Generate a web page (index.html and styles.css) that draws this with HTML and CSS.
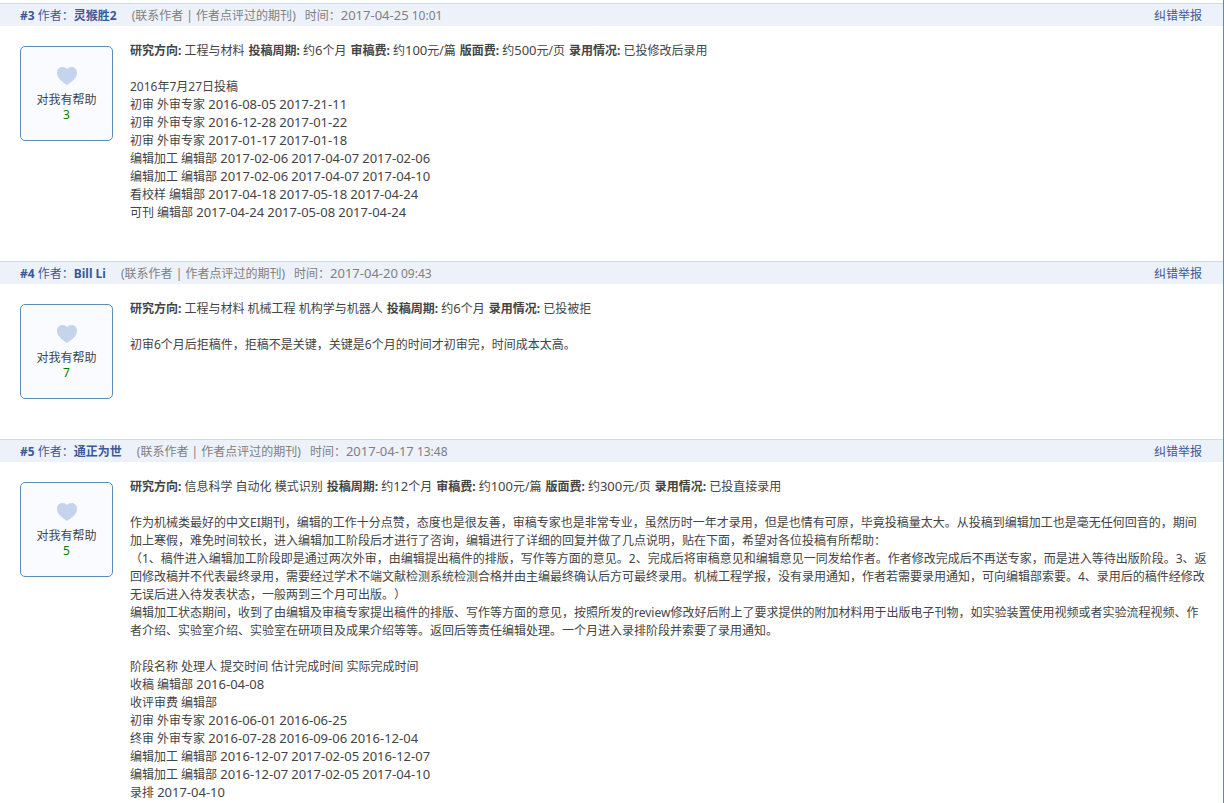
FILE: index.html
```html
<!DOCTYPE html>
<html lang="zh-CN">
<head>
<meta charset="utf-8">
<title>期刊点评</title>
<link rel="stylesheet" href="styles.css">
</head>
<body>
<svg class="sprite" aria-hidden="true">
  <symbol id="heart" viewBox="0 0 20 18">
    <path d="M10 18 C8 16.8 3.6 13.6 1.6 10.8 C.4 9.1 0 7.400 0 5.600 C0 2.400 2.300 0 5.400 0 C7.400 0 9.100 .8 10 2.200 C10.900 .8 12.600 0 14.600 0 C17.700 0 20 2.400 20 5.600 C20 7.400 19.600 9.100 18.400 10.800 C16.400 13.600 12 16.800 10 18 Z"/>
  </symbol>
</svg>
<main class="reviews">
  <article class="review">
    <header class="review-head">
      <div class="author"><b>#3</b> 作者：<a href="#"><b>灵猴胜2</b></a></div>
      <div class="links">(<a href="#">联系作者</a> | <a href="#">作者点评过的期刊</a>)</div>
      <div class="posted">时间：<time>2017-04-25</time> 10:01</div>
      <a class="report" href="#">纠错举报</a>
    </header>
    <div class="review-body">
      <button class="vote" type="button">
        <svg class="heart"><use href="#heart"/></svg>
        <span>对我有帮助</span>
        <span class="count">3</span>
      </button>
      <div class="content">
        <div class="meta">
          <span><b>研究方向:</b> 工程与材料</span>
          <span><b>投稿周期:</b> 约<span class="num">6</span>个月</span>
          <span><b>审稿费:</b> 约<span class="num">100</span>元/篇</span>
          <span><b>版面费:</b> 约<span class="num">500</span>元/页</span>
          <span><b>录用情况:</b> 已投修改后录用</span>
        </div>
        <p>2016年7月27日投稿<br>
          初审 外审专家 <time>2016-08-05</time> <time>2017-21-11</time><br>
          初审 外审专家 <time>2016-12-28</time> <time>2017-01-22</time><br>
          初审 外审专家 <time>2017-01-17</time> <time>2017-01-18</time><br>
          编辑加工 编辑部 <time>2017-02-06</time> <time>2017-04-07</time> <time>2017-02-06</time><br>
          编辑加工 编辑部 <time>2017-02-06</time> <time>2017-04-07</time> <time>2017-04-10</time><br>
          看校样 编辑部 <time>2017-04-18</time> <time>2017-05-18</time> <time>2017-04-24</time><br>
          可刊 编辑部 <time>2017-04-24</time> <time>2017-05-08</time> <time>2017-04-24</time></p>
      </div>
    </div>
  </article>

  <article class="review">
    <header class="review-head">
      <div class="author"><b>#4</b> 作者：<a href="#"><b>Bill Li</b></a></div>
      <div class="links">(<a href="#">联系作者</a> | <a href="#">作者点评过的期刊</a>)</div>
      <div class="posted">时间：<time>2017-04-20</time> 09:43</div>
      <a class="report" href="#">纠错举报</a>
    </header>
    <div class="review-body">
      <button class="vote" type="button">
        <svg class="heart"><use href="#heart"/></svg>
        <span>对我有帮助</span>
        <span class="count">7</span>
      </button>
      <div class="content">
        <div class="meta">
          <span><b>研究方向:</b> 工程与材料 机械工程 机构学与机器人</span>
          <span><b>投稿周期:</b> 约<span class="num">6</span>个月</span>
          <span><b>录用情况:</b> 已投被拒</span>
        </div>
        <p>初审6个月后拒稿件，拒稿不是关键，关键是6个月的时间才初审完，时间成本太高。</p>
      </div>
    </div>
  </article>

  <article class="review">
    <header class="review-head">
      <div class="author"><b>#5</b> 作者：<a href="#"><b>通正为世</b></a></div>
      <div class="links">(<a href="#">联系作者</a> | <a href="#">作者点评过的期刊</a>)</div>
      <div class="posted">时间：<time>2017-04-17</time> 13:48</div>
      <a class="report" href="#">纠错举报</a>
    </header>
    <div class="review-body">
      <button class="vote" type="button">
        <svg class="heart"><use href="#heart"/></svg>
        <span>对我有帮助</span>
        <span class="count">5</span>
      </button>
      <div class="content">
        <div class="meta">
          <span><b>研究方向:</b> 信息科学 自动化 模式识别</span>
          <span><b>投稿周期:</b> 约<span class="num">12</span>个月</span>
          <span><b>审稿费:</b> 约<span class="num">100</span>元/篇</span>
          <span><b>版面费:</b> 约<span class="num">300</span>元/页</span>
          <span><b>录用情况:</b> 已投直接录用</span>
        </div>
        <p>作为机械类最好的中文EI期刊，编辑的工作十分点赞，态度也是很友善，审稿专家也是非常专业，虽然历时一年才录用，但是也情有可原，毕竟投稿量太大。从投稿到编辑加工也是毫无任何回音的，期间加上寒假，难免时间较长，进入编辑加工阶段后才进行了咨询，编辑进行了详细的回复并做了几点说明，贴在下面，希望对各位投稿有所帮助：<br>
          （1、稿件进入编辑加工阶段即是通过两次外审，由编辑提出稿件的排版，写作等方面的意见。2、完成后将审稿意见和编辑意见一同发给作者。作者修改完成后不再送专家，而是进入等待出版阶段。3、返回修改稿并不代表最终录用，需要经过学术不端文献检测系统检测合格并由主编最终确认后方可最终录用。机械工程学报，没有录用通知，作者若需要录用通知，可向编辑部索要。4、录用后的稿件经修改无误后进入待发表状态，一般两到三个月可出版。）<br>
          编辑加工状态期间，收到了由编辑及审稿专家提出稿件的排版、写作等方面的意见，按照所发的review修改好后附上了要求提供的附加材料用于出版电子刊物，如实验装置使用视频或者实验流程视频、作者介绍、实验室介绍、实验室在研项目及成果介绍等等。返回后等责任编辑处理。一个月进入录排阶段并索要了录用通知。</p>
        <p>阶段名称 处理人 提交时间 估计完成时间 实际完成时间<br>
          收稿 编辑部 <time>2016-04-08</time><br>
          收评审费 编辑部<br>
          初审 外审专家 <time>2016-06-01</time> <time>2016-06-25</time><br>
          终审 外审专家 <time>2016-07-28</time> <time>2016-09-06</time> <time>2016-12-04</time><br>
          编辑加工 编辑部 <time>2016-12-07</time> <time>2017-02-05</time> <time>2016-12-07</time><br>
          编辑加工 编辑部 <time>2016-12-07</time> <time>2017-02-05</time> <time>2017-04-10</time><br>
          录排 <time>2017-04-10</time></p>
      </div>
    </div>
  </article>
</main>
</body>
</html>
```
FILE: styles.css
```css
* {
  box-sizing: border-box;
}

body {
  margin: 0;
  background: #fff;
  color: #444;
  font: 12px/18px "Noto Sans", "Noto Sans CJK SC", sans-serif;
  text-spacing-trim: space-all;
}

a {
  color: inherit;
  text-decoration: none;
}

p {
  margin: 0;
}

time,
.num {
  font-size: 13px;
  line-height: 1;
}

.sprite {
  display: none;
}

.reviews {
  min-height: 100vh;
  padding-top: 3px;
  border-right: 1px solid #6189ad;
}

.review-head {
  display: flex;
  padding: 3px 21px 1px 20px;
  border-top: 1px solid #cddaea;
  background: #edf1fa;
  color: #808080;
}

.author,
.report {
  color: #3b5998;
}

.links {
  margin-left: 15px;
}

.posted {
  margin-left: 9px;
}

.report {
  margin-left: auto;
}

.review-body {
  display: flex;
  align-items: flex-start;
  gap: 17px;
  padding: 16px 15px 39px 20px;
}

.review:last-child .review-body {
  padding-bottom: 0;
}

.vote {
  display: flex;
  flex: none;
  flex-direction: column;
  align-items: center;
  width: 93px;
  margin: 4px 0 1px;
  padding: 20px 0 18px;
  border: 1px solid #5b8db8;
  border-radius: 5px;
  background: #f9fbfe;
  color: #444;
  font: inherit;
  line-height: 15px;
  cursor: pointer;
}

.heart {
  width: 20px;
  height: 18px;
  margin-bottom: 7px;
  fill: #c5d4ed;
}

.count {
  color: #008000;
}

.content {
  flex: 1;
  min-width: 0;
}

.meta {
  display: flex;
  flex-wrap: wrap;
  column-gap: 4px;
}

.content p {
  margin-top: 18px;
}
```
